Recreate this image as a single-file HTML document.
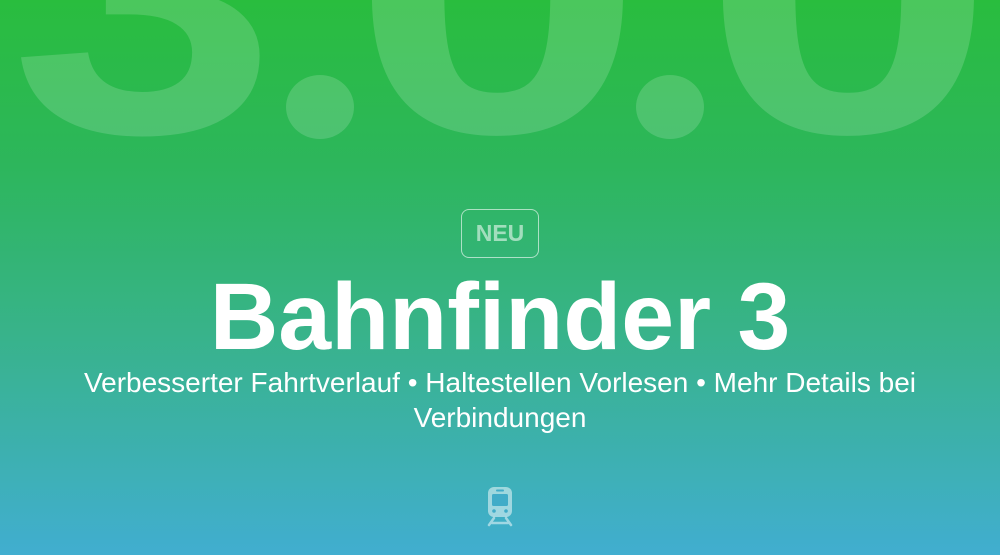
<!DOCTYPE html>
<html><head><meta charset="utf-8"><style>
html,body{margin:0;padding:0}
body{width:1000px;height:555px;overflow:hidden;position:relative;font-family:"Liberation Sans",sans-serif;
background:linear-gradient(180deg,#29bd3e 0%,#2db65c 30%,#38b38a 60%,#41aed0 100%);}
.big{position:absolute;left:0;top:0}
.badge{position:absolute;left:461px;top:209px;border:1.5px solid rgba(255,255,255,0.6);border-radius:8px;
box-sizing:border-box;width:78px;height:49px;color:rgba(255,255,255,0.55);font-weight:bold;font-size:23px;text-align:center;line-height:46px}
h1{position:absolute;left:0;width:1000px;top:262px;margin:0;text-align:center;color:#fff;font-size:95px;font-weight:bold;line-height:110px}
.sub{position:absolute;left:40px;width:920px;top:365px;text-align:center;color:#fff;font-size:28px;line-height:35px}
</style></head><body>
<svg class="big" width="1000" height="555">
<g fill="rgba(255,255,255,0.16)" font-family="Liberation Sans" font-weight="bold" font-size="400">
<text transform="translate(10,132) scale(1.2,1)">3</text>
<text transform="translate(351,132) scale(1.32,1)">0</text>
<text transform="translate(702,132) scale(1.32,1)">0</text>
<ellipse cx="320" cy="107" rx="34" ry="32"/>
<ellipse cx="670" cy="107" rx="34" ry="32"/>
</g></svg>
<div class="badge">NEU</div>
<h1>Bahnfinder 3</h1>
<div class="sub">Verbesserter Fahrtverlauf • Haltestellen Vorlesen • Mehr Details bei Verbindungen</div>
<svg style="position:absolute;left:485px;top:485px" width="30" height="42" viewBox="0 0 30 42">
<g fill="none" stroke="rgba(255,255,255,0.5)" stroke-width="2.5" stroke-linecap="round">
<rect x="3" y="2" width="24" height="30" rx="6" fill="rgba(255,255,255,0.5)" stroke="none"/>
<path d="M9 33 L4 40 M21 33 L26 40 M7 38 H23"/>
</g>
<rect x="7" y="9" width="16" height="12" rx="1.5" fill="#41acc8"/>
<rect x="11" y="4.5" width="8" height="2" rx="1" fill="#41acc8"/>
<circle cx="9" cy="26" r="1.8" fill="#41acc8"/><circle cx="21" cy="26" r="1.8" fill="#41acc8"/>
</svg>
</body></html>
